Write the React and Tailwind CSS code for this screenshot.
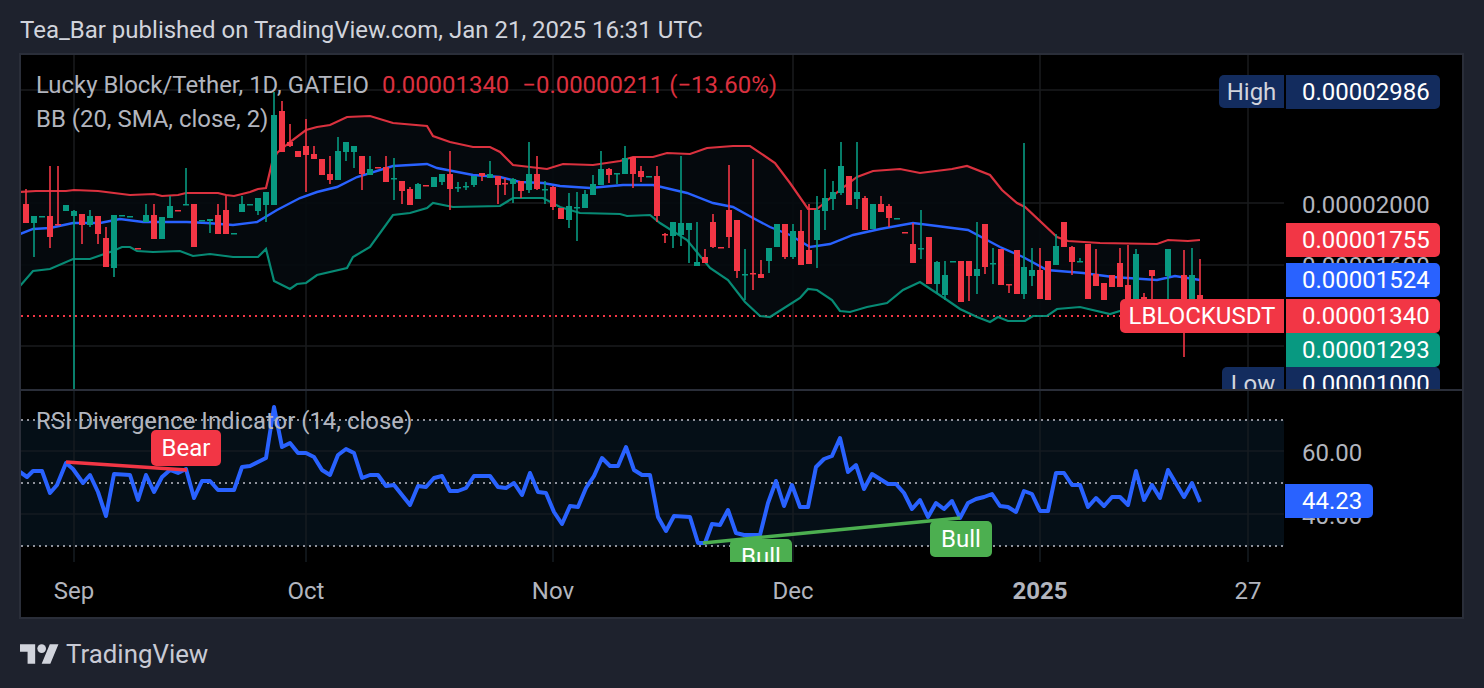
import React from 'react';

const GREEN = '#089981';
const RED = '#f23645';
const BLUE = '#2962ff';
const NAVY = '#132c5e';

// x, wick top, wick bottom, body top, body bottom, colour
const candles = [
  [26, 189, 223, 204, 223, 'r'], [34, 216, 257, 216, 223, 'g'], [42, 216, 217, 216, 217, 'g'], [50, 166, 248, 216, 237, 'r'],
  [58, 166, 225, 224, 225, 'r'], [66, 205, 211, 205, 211, 'g'], [74, 210, 389, 211, 216, 'g'], [82, 214, 244, 214, 225, 'r'],
  [90, 210, 227, 216, 225, 'g'], [98, 216, 244, 216, 234, 'r'], [106, 227, 267, 238, 267, 'r'], [114, 215, 277, 215, 268, 'g'],
  [122, 215, 216, 215, 216, 'g'], [130, 216, 217, 216, 217, 'g'], [138, 248, 249, 248, 249, 'r'], [146, 204, 222, 215, 222, 'g'],
  [154, 204, 239, 215, 239, 'r'], [162, 217, 239, 217, 239, 'g'], [170, 196, 218, 206, 218, 'g'], [178, 210, 211, 210, 211, 'r'],
  [186, 168, 205, 204, 205, 'g'], [194, 204, 247, 204, 247, 'r'], [202, 220, 221, 220, 221, 'g'], [210, 219, 233, 219, 221, 'g'],
  [218, 204, 234, 215, 234, 'r'], [226, 196, 234, 210, 234, 'r'], [234, 233, 234, 233, 234, 'g'], [242, 196, 212, 204, 212, 'g'],
  [250, 204, 205, 204, 205, 'g'], [258, 198, 215, 198, 211, 'g'], [266, 192, 222, 192, 205, 'g'], [274, 92, 205, 115, 205, 'g'],
  [282, 101, 152, 111, 152, 'r'], [290, 124, 147, 142, 146, 'r'], [298, 151, 157, 151, 157, 'r'], [306, 119, 192, 146, 155, 'r'],
  [314, 146, 159, 154, 159, 'r'], [322, 159, 175, 159, 175, 'r'], [330, 156, 184, 174, 180, 'r'], [338, 137, 180, 151, 180, 'g'],
  [346, 142, 161, 142, 152, 'g'], [354, 146, 168, 146, 152, 'g'], [362, 156, 190, 156, 174, 'r'], [370, 156, 175, 169, 175, 'g'],
  [378, 167, 168, 167, 168, 'r'], [386, 156, 182, 167, 182, 'r'], [394, 158, 200, 178, 179, 'g'], [402, 181, 204, 181, 191, 'r'],
  [410, 187, 205, 189, 205, 'r'], [418, 183, 199, 184, 199, 'g'], [426, 185, 186, 185, 186, 'r'], [434, 177, 187, 177, 187, 'g'],
  [442, 174, 185, 174, 182, 'g'], [450, 151, 210, 174, 189, 'r'], [458, 182, 192, 187, 188, 'g'], [466, 182, 190, 186, 187, 'g'],
  [474, 176, 187, 176, 185, 'g'], [482, 173, 181, 173, 176, 'r'], [490, 161, 178, 174, 178, 'g'], [498, 176, 204, 176, 185, 'r'],
  [505, 178, 195, 183, 184, 'r'], [513, 178, 203, 179, 184, 'g'], [521, 181, 198, 181, 191, 'r'], [529, 142, 193, 174, 190, 'g'],
  [537, 156, 190, 174, 189, 'r'], [545, 181, 204, 189, 190, 'g'], [553, 186, 210, 187, 207, 'r'], [561, 208, 219, 208, 219, 'r'],
  [569, 193, 228, 206, 220, 'g'], [577, 192, 241, 207, 208, 'g'], [585, 190, 208, 194, 208, 'g'], [593, 175, 195, 184, 195, 'g'],
  [601, 151, 185, 169, 185, 'g'], [609, 168, 183, 169, 175, 'r'], [617, 173, 184, 173, 174, 'g'], [625, 146, 174, 158, 174, 'g'],
  [633, 157, 188, 157, 174, 'r'], [641, 166, 182, 171, 177, 'r'], [649, 176, 177, 176, 177, 'g'], [657, 166, 222, 176, 216, 'r'],
  [665, 233, 243, 234, 235, 'r'], [673, 222, 248, 222, 236, 'g'], [681, 156, 246, 223, 235, 'g'], [689, 223, 263, 223, 230, 'g'],
  [697, 222, 266, 262, 266, 'g'], [705, 249, 263, 257, 263, 'r'], [713, 214, 248, 222, 247, 'r'], [721, 247, 248, 247, 248, 'r'],
  [729, 165, 248, 210, 237, 'r'], [737, 220, 278, 220, 271, 'r'], [745, 249, 300, 274, 275, 'g'], [753, 159, 290, 273, 274, 'r'],
  [761, 260, 278, 274, 278, 'r'], [769, 248, 273, 248, 261, 'g'], [777, 224, 247, 224, 247, 'g'], [785, 224, 259, 224, 257, 'r'],
  [793, 224, 259, 231, 257, 'g'], [801, 210, 265, 231, 265, 'r'], [809, 204, 264, 250, 264, 'r'], [817, 196, 268, 210, 240, 'g'],
  [825, 169, 230, 198, 211, 'g'], [833, 181, 210, 192, 199, 'g'], [841, 142, 195, 166, 193, 'g'], [849, 176, 205, 176, 205, 'r'],
  [857, 142, 209, 192, 199, 'g'], [865, 196, 230, 198, 230, 'r'], [873, 204, 229, 204, 229, 'g'], [881, 196, 212, 204, 212, 'r'],
  [889, 204, 227, 206, 218, 'r'], [897, 218, 219, 218, 219, 'g'], [905, 232, 233, 232, 233, 'r'], [913, 223, 263, 244, 263, 'r'],
  [921, 210, 259, 248, 249, 'g'], [929, 237, 284, 237, 284, 'r'], [937, 261, 293, 262, 284, 'g'], [945, 261, 300, 275, 295, 'g'],
  [953, 261, 262, 261, 262, 'g'], [961, 261, 302, 261, 302, 'r'], [969, 261, 301, 261, 276, 'r'], [977, 222, 294, 269, 276, 'g'],
  [985, 224, 274, 224, 267, 'r'], [993, 248, 284, 263, 264, 'g'], [1001, 249, 285, 249, 285, 'r'], [1009, 284, 293, 284, 285, 'r'],
  [1017, 250, 294, 250, 294, 'r'], [1024, 143, 299, 267, 294, 'g'], [1032, 248, 286, 270, 276, 'g'], [1040, 248, 299, 270, 299, 'r'],
  [1048, 261, 300, 261, 300, 'r'], [1056, 234, 265, 246, 265, 'g'], [1064, 222, 247, 222, 247, 'r'], [1072, 246, 275, 247, 262, 'r'],
  [1080, 258, 262, 261, 262, 'g'], [1088, 244, 299, 244, 299, 'r'], [1096, 249, 286, 274, 286, 'r'], [1104, 283, 300, 283, 300, 'r'],
  [1112, 275, 287, 275, 287, 'r'], [1120, 248, 287, 263, 287, 'r'], [1128, 245, 303, 285, 300, 'r'], [1136, 249, 300, 254, 300, 'g'],
  [1144, 293, 300, 297, 300, 'r'], [1152, 270, 300, 270, 276, 'r'], [1160, 299, 300, 299, 300, 'g'], [1168, 249, 300, 249, 276, 'g'],
  [1184, 250, 357, 275, 300, 'r'], [1192, 248, 300, 275, 300, 'g'], [1200, 259, 300, 295, 305, 'r'],
];

const upper = '20,192 36,191 50,191 66,191 74,190 98,191 114,193 130,195 154,194 162,196 178,195 186,193 218,193 226,195 234,196 250,192 258,189 266,188 272,163 277,153 290,142 306,130 317,127 330,125 347,117 370,116 393,123 427,126 433,136 450,142 473,147 490,147 500,152 513,165 530,167 547,169 563,164 593,165 620,161 633,157 653,157 667,153 690,154 707,148 733,146 750,146 775,163 790,183 808,209 817,209 840,190 857,177 873,171 900,169 920,173 952,169 967,166 990,175 1002,190 1017,203 1025,207 1057,237 1068,241 1100,243 1157,244 1168,240 1188,241 1200,240';
const basis = '20,234 33,229 50,228 73,223 100,223 120,219 143,222 187,222 207,223 233,225 257,222 277,210 300,198 317,192 337,187 357,177 393,166 427,164 437,168 473,175 500,177 520,182 543,183 560,186 590,188 623,185 653,185 687,193 713,203 733,207 753,218 770,227 790,235 810,247 830,244 853,235 880,229 913,223 937,226 968,230 1000,247 1023,257 1047,270 1083,273 1113,277 1157,280 1175,276 1200,280';
const lower = '20,286 33,271 50,269 73,259 90,259 113,251 122,247 130,247 137,251 153,252 180,251 193,256 210,254 233,257 258,257 266,249 274,281 290,289 297,284 306,283 317,275 347,268 353,257 370,247 393,215 410,213 427,208 433,203 453,207 500,206 513,198 543,198 560,207 580,213 620,214 627,216 650,215 660,223 687,240 710,268 728,280 745,302 760,316 770,317 800,298 808,289 817,290 832,300 840,311 850,312 867,307 887,303 903,290 920,282 947,300 960,309 977,317 990,322 998,317 1008,321 1025,321 1033,316 1047,316 1057,309 1080,307 1110,314 1123,310 1150,308 1200,310';
const rsi = '20,472 27,477 33,471 42,471 50,493 57,485 66,463 73,469 83,483 90,475 98,492 106,516 114,474 130,475 138,500 146,475 154,492 162,477 170,470 178,473 186,469 194,498 202,481 210,481 218,490 234,490 242,467 250,466 266,458 274,407 282,447 290,443 298,453 306,453 314,457 322,470 330,475 338,455 346,449 354,453 362,478 370,475 378,475 386,486 394,485 410,505 418,486 426,487 434,478 442,476 450,491 458,491 466,488 474,476 490,476 498,487 506,488 514,483 522,495 530,473 538,492 546,493 554,512 562,524 570,506 578,507 586,488 594,476 602,458 610,466 618,466 626,447 634,470 642,475 650,475 658,517 666,531 674,516 690,517 698,543 705,543 712,524 720,525 728,510 736,533 744,535 760,535 768,503 776,481 784,506 792,485 800,507 808,507 816,467 824,459 832,456 840,438 848,472 856,465 864,489 872,474 888,484 896,484 904,493 912,509 920,500 928,517 936,503 944,509 952,501 960,518 968,503 976,499 984,497 992,494 1000,506 1008,507 1016,512 1024,491 1032,494 1040,511 1048,511 1056,473 1064,473 1072,485 1080,485 1088,507 1096,498 1104,506 1112,497 1120,497 1128,505 1136,471 1144,500 1152,485 1160,498 1168,470 1184,497 1192,483 1200,502';

const bandFill = upper + ' ' + lower.split(' ').reverse().join(' ');
const gridX = [74, 306, 553, 793, 1040, 1248];

const Tag = ({ bg, className = '', children }) => (
  <div
    className={`relative shrink-0 ml-[2px] w-[154px] h-[34px] rounded-r-[5px] flex items-center pl-[16px] text-white ${className}`}
    style={{ backgroundColor: bg }}
  >
    {children}
  </div>
);

const MainPlot = () => (
  <svg viewBox="21 55 1263 334" className="block w-full h-full">
    {[90, 203, 265, 346].map((y) => (
      <line key={y} x1="21" x2="1284" y1={y} y2={y} stroke="#1a1b1e" strokeWidth="1.5" />
    ))}
    {gridX.map((x) => (
      <line key={x} x1={x} x2={x} y1="55" y2="389" stroke="#1a1b1e" strokeWidth="1.5" />
    ))}
    <polygon points={bandFill} fill="#060a0e" fillOpacity="0.9" />
    <line x1="21" x2="1284" y1="316" y2="316" stroke={RED} strokeWidth="1.8" strokeDasharray="2 4" />
    <polyline points={upper} fill="none" stroke={RED} strokeWidth="2.2" strokeOpacity="0.9" />
    <polyline points={lower} fill="none" stroke={GREEN} strokeWidth="2.2" strokeOpacity="0.9" />
    <polyline points={basis} fill="none" stroke={BLUE} strokeWidth="2.4" />
    {candles.map(([x, wt, wb, bt, bb, c]) => {
      const color = c === 'g' ? GREEN : RED;
      return (
        <g key={x} fill={color}>
          <rect x={x - 0.8} y={wt} width="1.6" height={wb - wt} />
          <rect x={x - 3} y={bt} width="6" height={Math.max(bb - bt, 1.5)} />
        </g>
      );
    })}
  </svg>
);

const RsiPlot = () => (
  <svg viewBox="21 391 1263 171" className="block w-full h-full">
    <rect x="21" y="420" width="1263" height="126" fill="#050f17" />
    {[451, 514].map((y) => (
      <line key={y} x1="21" x2="1284" y1={y} y2={y} stroke="#141b22" strokeWidth="1.5" />
    ))}
    {gridX.map((x) => (
      <line key={x} x1={x} x2={x} y1="391" y2="562" stroke="#161c22" strokeWidth="1.5" />
    ))}
    {[420, 483, 546].map((y) => (
      <line key={y} x1="21" x2="1284" y1={y} y2={y} stroke="#8f929c" strokeWidth="1.8" strokeDasharray="2 4" />
    ))}
    <polyline points={rsi} fill="none" stroke={BLUE} strokeWidth="4" strokeLinejoin="round" />
    <line x1="66" y1="462" x2="187" y2="470" stroke={RED} strokeWidth="3.6" />
    <line x1="703" y1="543" x2="960" y2="518" stroke="#4caf50" strokeWidth="3.6" />
  </svg>
);

export default function App() {
  return (
    <div className="w-[1484px] h-[688px] bg-[#1e222d] text-[24px] leading-none overflow-hidden" style={{ fontFamily: 'Roboto, sans-serif' }}>
      <div className="h-[53px] pl-[20px] flex items-center pt-[7px] text-[#d1d4dc]">
        Tea_Bar published on TradingView.com, Jan 21, 2025 16:31 UTC
      </div>

      <div className="ml-[19px] w-[1445px] h-[566px] border-2 border-[#2a2e39] bg-black flex flex-col text-[#b2b5be]">
        {/* Price pane */}
        <div className="h-[334px] flex overflow-hidden">
          <div className="w-[1263px] relative">
            <MainPlot />
            <div className="absolute left-[15px] top-[19px] flex flex-col gap-[10px] text-[23.93px]">
              <div className="flex h-[24px] items-center gap-[13px] whitespace-pre">
                <span>Lucky Block/Tether, 1D, GATEIO</span>
                <span className="text-[#f23645] opacity-90">0.00001340</span>
                <span className="text-[#f23645] opacity-90">−0.00000211 (−13.60%)</span>
              </div>
              <div className="h-[24px] flex items-center">BB (20, SMA, close, 2)</div>
            </div>
            <div className="absolute left-[1198px] top-[20px] w-[65px] h-[33px] rounded-l-[5px] bg-[#132c5e] text-[#d1d4dc] flex items-center justify-center">High</div>
            <div className="absolute left-[1099px] top-[244px] w-[164px] h-[34px] rounded-l-[5px] bg-[#f23645] text-white flex items-center justify-center">LBLOCKUSDT</div>
            <div className="absolute left-[1201px] top-[312px] w-[62px] h-[34px] rounded-l-[5px] bg-[#132c5e] text-[#d1d4dc] flex items-center justify-center">Low</div>
          </div>
          <div className="w-[178px] relative flex flex-col pt-[20px]">
            <div className="absolute left-[18px] top-[199px]">0.00001600</div>
            <Tag bg={NAVY}>0.00002986</Tag>
            <div className="mt-[84px] ml-[18px] h-[24px] shrink-0">0.00002000</div>
            <Tag bg={RED} className="mt-[6px]">0.00001755</Tag>
            <Tag bg={BLUE} className="mt-[6px]">0.00001524</Tag>
            <Tag bg={RED} className="mt-[2px]">0.00001340</Tag>
            <Tag bg={GREEN}>0.00001293</Tag>
            <Tag bg={NAVY}>0.00001000</Tag>
          </div>
        </div>

        <div className="h-[2px] bg-[#2a2e39]" />

        {/* RSI pane */}
        <div className="h-[171px] flex overflow-hidden">
          <div className="w-[1263px] relative overflow-hidden">
            <RsiPlot />
            <div className="absolute left-[15px] top-[19px] h-[24px] flex items-center text-[23.93px]">RSI Divergence Indicator (14, close)</div>
            <div className="absolute left-[130px] top-[39px] w-[70px] h-[36px] rounded-[5px] bg-[#f23645] text-white flex items-center justify-center">Bear</div>
            <div className="absolute left-[709px] top-[148px] w-[62px] h-[36px] rounded-[5px] bg-[#4caf50] text-white flex items-center justify-center">Bull</div>
            <div className="absolute left-[909px] top-[130px] w-[62px] h-[36px] rounded-[5px] bg-[#4caf50] text-white flex items-center justify-center">Bull</div>
          </div>
          <div className="w-[178px] relative flex flex-col pt-[50px]">
            <div className="absolute left-[18px] top-[113px]">40.00</div>
            <div className="ml-[18px] h-[24px] shrink-0">60.00</div>
            <div className="relative mt-[19px] ml-[1px] w-[88px] h-[34px] shrink-0 rounded-r-[5px] bg-[#2962ff] text-white flex items-center pl-[17px]">44.23</div>
          </div>
        </div>

        {/* Time axis */}
        <div className="relative h-[55px]">
          {[['Sep', 74], ['Oct', 306], ['Nov', 553], ['Dec', 793], ['2025', 1040], ['27', 1248]].map(([label, x]) => (
            <div
              key={label}
              className={label === '2025' ? 'absolute top-[17px] -translate-x-1/2 font-bold' : 'absolute top-[17px] -translate-x-1/2'}
              style={{ left: x - 21 }}
            >
              {label}
            </div>
          ))}
        </div>
      </div>

      <div className="h-[69px] pl-[20px] flex items-center gap-[7px] pt-[3px]">
        <svg viewBox="0 4 36 18" className="w-[39px] h-[20px] -mt-[2px]" fill="#d1d4dc">
          <path d="M14 22H7V11H0V4h14v18zM28 22h-8l7.5-18h8L28 22z" />
          <circle cx="20" cy="8" r="4" />
        </svg>
        <span className="text-[25.85px] text-[#c8cad4]">TradingView</span>
      </div>
    </div>
  );
}
